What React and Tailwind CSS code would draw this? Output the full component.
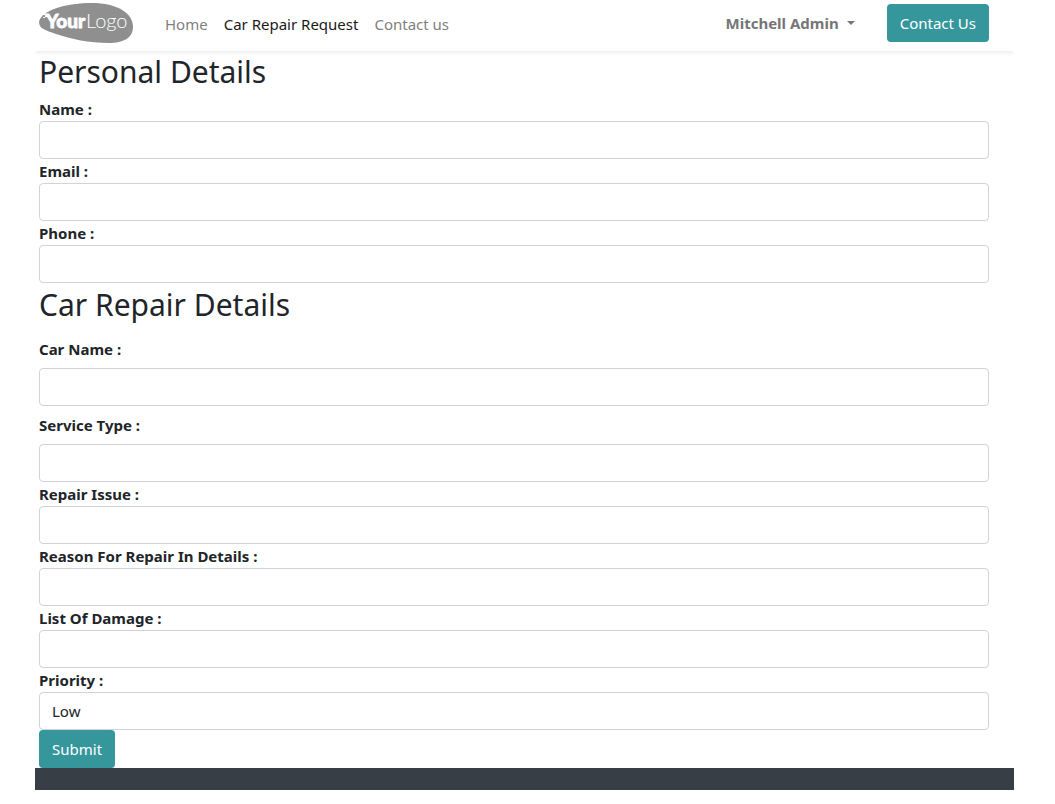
function Logo() {
  return (
    <svg className="h-10 w-[94px]" viewBox="0 0 94 40" role="img" aria-label="Your Logo">
      <path
        d="M0 19C2 7 28 0 53 0C78 0 94 10 94 24C94 35 84 40 70 40C50 40 32 36 17 31C5 27 0 25 0 19Z"
        fill="#8f8f8f"
      />
      <path d="M4 10h2v2H4zM6 11h3v3H6zM4 14h2v1H4zM2 12h1v1H2z" fill="#fff" />
      <text x="7" y="25" fill="#fff" stroke="#fff" strokeWidth="0.8" fontFamily="Lato, sans-serif" fontSize="19" fontWeight="900">
        Your
      </text>
      <text x="47" y="25" fill="#fff" fontFamily="Lato, sans-serif" fontSize="20" fontWeight="300">
        Logo
      </text>
    </svg>
  );
}

const control =
  'block h-[38px] w-full appearance-none rounded border border-[#ced4da] bg-white px-3 text-[#212529] outline-none focus:border-[#35979c]';

function Field({ id, label, type = 'text', roomy = false, children }) {
  return (
    <div>
      <label htmlFor={id} className={roomy ? 'block py-[7px] font-bold' : 'block font-bold leading-6'}>
        {label} :
      </label>
      {children || <input id={id} name={id} type={type} className={control} />}
    </div>
  );
}

function SectionTitle({ children }) {
  return <h2 className="pb-1.5 pt-0.5 text-[30px] leading-[38px]">{children}</h2>;
}

export default function App() {
  return (
    <div className="ml-[35px] mr-[41px] font-['Noto_Sans',sans-serif] text-[15px] leading-6 text-[#212529]">
      <header className="flex h-[51px] items-start pl-1 pr-[25px] shadow-[0_2px_4px_rgba(0,0,0,0.075)] [clip-path:inset(0_0_-6px_0)]">
        <a href="#home" className="mt-[3px] shrink-0">
          <Logo />
        </a>
        <nav className="ml-8 mt-3 flex gap-4 whitespace-nowrap text-[#7f7f7f]">
          <a href="#home">Home</a>
          <a href="#repair" className="text-[#191919]" aria-current="page">
            Car Repair Request
          </a>
          <a href="#contact">Contact us</a>
        </nav>
        <div className="ml-auto flex shrink-0 items-center gap-8 pt-1">
          <button type="button" className="flex items-center gap-2 font-bold text-[#767676]">
            Mitchell Admin
            <svg className="h-1 w-2" viewBox="0 0 8 4" aria-hidden="true">
              <path d="M0 0h8L4 4z" fill="currentColor" />
            </svg>
          </button>
          <a href="#contact" className="flex h-[38px] items-center rounded bg-[#35979c] px-[13px] text-white">
            Contact Us
          </a>
        </div>
      </header>

      <form className="pl-1 pr-[25px]" onSubmit={(event) => event.preventDefault()}>
        <section>
          <SectionTitle>Personal Details</SectionTitle>
          <Field id="name" label="Name" />
          <Field id="email" label="Email" type="email" />
          <Field id="phone" label="Phone" type="tel" />
        </section>
        <section className="pt-px">
          <SectionTitle>Car Repair Details</SectionTitle>
          <Field id="car-name" label="Car Name" roomy />
          <Field id="service-type" label="Service Type" roomy />
          <Field id="repair-issue" label="Repair Issue" />
          <Field id="reason" label="Reason For Repair In Details" />
          <Field id="damage" label="List Of Damage" />
          <Field id="priority" label="Priority">
            <select id="priority" name="priority" defaultValue="Low" className={control}>
              <option>Low</option>
              <option>Medium</option>
              <option>High</option>
            </select>
          </Field>
        </section>
        <button type="submit" className="block h-[38px] rounded bg-[#35979c] px-[13px] text-white">
          Submit
        </button>
      </form>
      <footer className="h-[22px] bg-[#383e45]" />
    </div>
  );
}
